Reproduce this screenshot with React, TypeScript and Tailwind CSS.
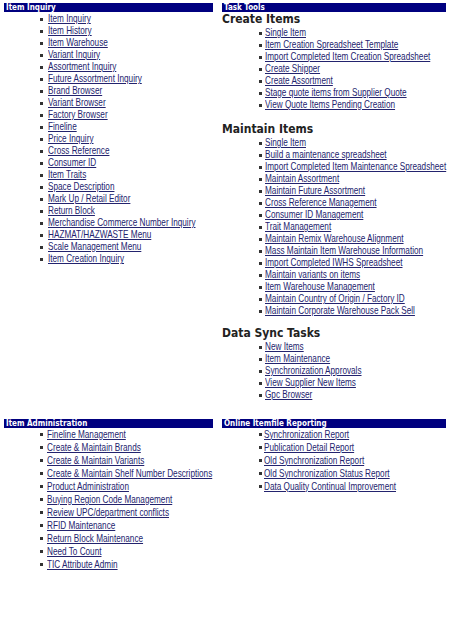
import React from 'react';

const itemInquiry = [
  'Item Inquiry', 'Item History', 'Item Warehouse', 'Variant Inquiry', 'Assortment Inquiry',
  'Future Assortment Inquiry', 'Brand Browser', 'Variant Browser', 'Factory Browser', 'Fineline',
  'Price Inquiry', 'Cross Reference', 'Consumer ID', 'Item Traits', 'Space Description',
  'Mark Up / Retail Editor', 'Return Block', 'Merchandise Commerce Number Inquiry',
  'HAZMAT/HAZWASTE Menu', 'Scale Management Menu', 'Item Creation Inquiry',
];

const createItems = [
  'Single Item', 'Item Creation Spreadsheet Template', 'Import Completed Item Creation Spreadsheet',
  'Create Shipper', 'Create Assortment', 'Stage quote items from Supplier Quote',
  'View Quote Items Pending Creation',
];

const maintainItems = [
  'Single Item', 'Build a maintenance spreadsheet', 'Import Completed Item Maintenance Spreadsheet',
  'Maintain Assortment', 'Maintain Future Assortment', 'Cross Reference Management',
  'Consumer ID Management', 'Trait Management', 'Maintain Remix Warehouse Alignment',
  'Mass Maintain Item Warehouse Information', 'Import Completed IWHS Spreadsheet',
  'Maintain variants on items', 'Item Warehouse Management', 'Maintain Country of Origin / Factory ID',
  'Maintain Corporate Warehouse Pack Sell',
];

const dataSync = [
  'New Items', 'Item Maintenance', 'Synchronization Approvals', 'View Supplier New Items', 'Gpc Browser',
];

const itemAdmin = [
  'Fineline Management', 'Create & Maintain Brands', 'Create & Maintain Variants',
  'Create & Maintain Shelf Number Descriptions', 'Product Administration',
  'Buying Region Code Management', 'Review UPC/department conflicts', 'RFID Maintenance',
  'Return Block Maintenance', 'Need To Count', 'TIC Attribute Admin',
];

const reporting = [
  'Synchronization Report', 'Publication Detail Report', 'Old Synchronization Report',
  'Old Synchronization Status Report', 'Data Quality Continual Improvement',
];

const Bar = ({ title }: { title: string }) => (
  <div className="h-[9px] bg-[#00007f] pl-[2px] text-[8px] leading-[9px] font-bold text-white font-['DejaVu_Sans_Condensed','DejaVu_Sans',sans-serif] font-stretch-condensed whitespace-nowrap">
    {title}
  </div>
);

const Heading = ({ title }: { title: string }) => (
  <h2 className="h-[15px] text-[12px] leading-[15px] font-bold text-[#222] font-['DejaVu_Sans_Condensed','DejaVu_Sans',sans-serif] font-stretch-condensed whitespace-nowrap">
    {title}
  </h2>
);

// narrow link text (no Arial Narrow available, so squeeze Liberation Sans)
const LinkList = ({ items, pad, gap, row }: { items: string[]; pad: string; gap: string; row: string }) => (
  <ul className={`${pad} font-['Liberation_Sans',Arial,sans-serif] text-[10.5px]`}>
    {items.map((it, i) => (
      <li key={i} className={`flex items-center ${row} whitespace-nowrap`}>
        <span className={`w-[3px] h-[3px] bg-[#333] shrink-0 ${gap}`}></span>
        <a href="#" className="inline-block origin-left scale-x-[0.78] text-[#23236e] underline">{it}</a>
      </li>
    ))}
  </ul>
);

export default function App() {
  return (
    <div className="w-[451px] h-[619px] bg-white pt-[3px] pl-[4px] overflow-hidden">
      <div className="grid grid-cols-[209px_224px] gap-x-[9px] gap-y-[18px]">
        {/* Item Inquiry */}
        <section>
          <Bar title="Item Inquiry" />
          <div className="pt-[1px]">
            <LinkList items={itemInquiry} pad="pl-[36px]" gap="mr-[5px]" row="h-[12px]" />
          </div>
        </section>

        {/* Task Tools */}
        <section>
          <Bar title="Task Tools" />
          <Heading title="Create Items" />
          <LinkList items={createItems} pad="pl-[37px]" gap="mr-[3px]" row="h-[12px]" />
          <div className="mt-[11px]">
            <Heading title="Maintain Items" />
          </div>
          <LinkList items={maintainItems} pad="pl-[37px]" gap="mr-[3px]" row="h-[12px]" />
          <div className="mt-[9px]">
            <Heading title="Data Sync Tasks" />
          </div>
          <LinkList items={dataSync} pad="pl-[37px]" gap="mr-[3px]" row="h-[12px]" />
        </section>

        {/* Item Administration */}
        <section>
          <Bar title="Item Administration" />
          <LinkList items={itemAdmin} pad="pl-[36px]" gap="mr-[4px]" row="h-[13px]" />
        </section>

        {/* Online Itemfile Reporting */}
        <section>
          <Bar title="Online Itemfile Reporting" />
          <LinkList items={reporting} pad="pl-[37px]" gap="mr-[2px]" row="h-[13px]" />
        </section>
      </div>
    </div>
  );
}
